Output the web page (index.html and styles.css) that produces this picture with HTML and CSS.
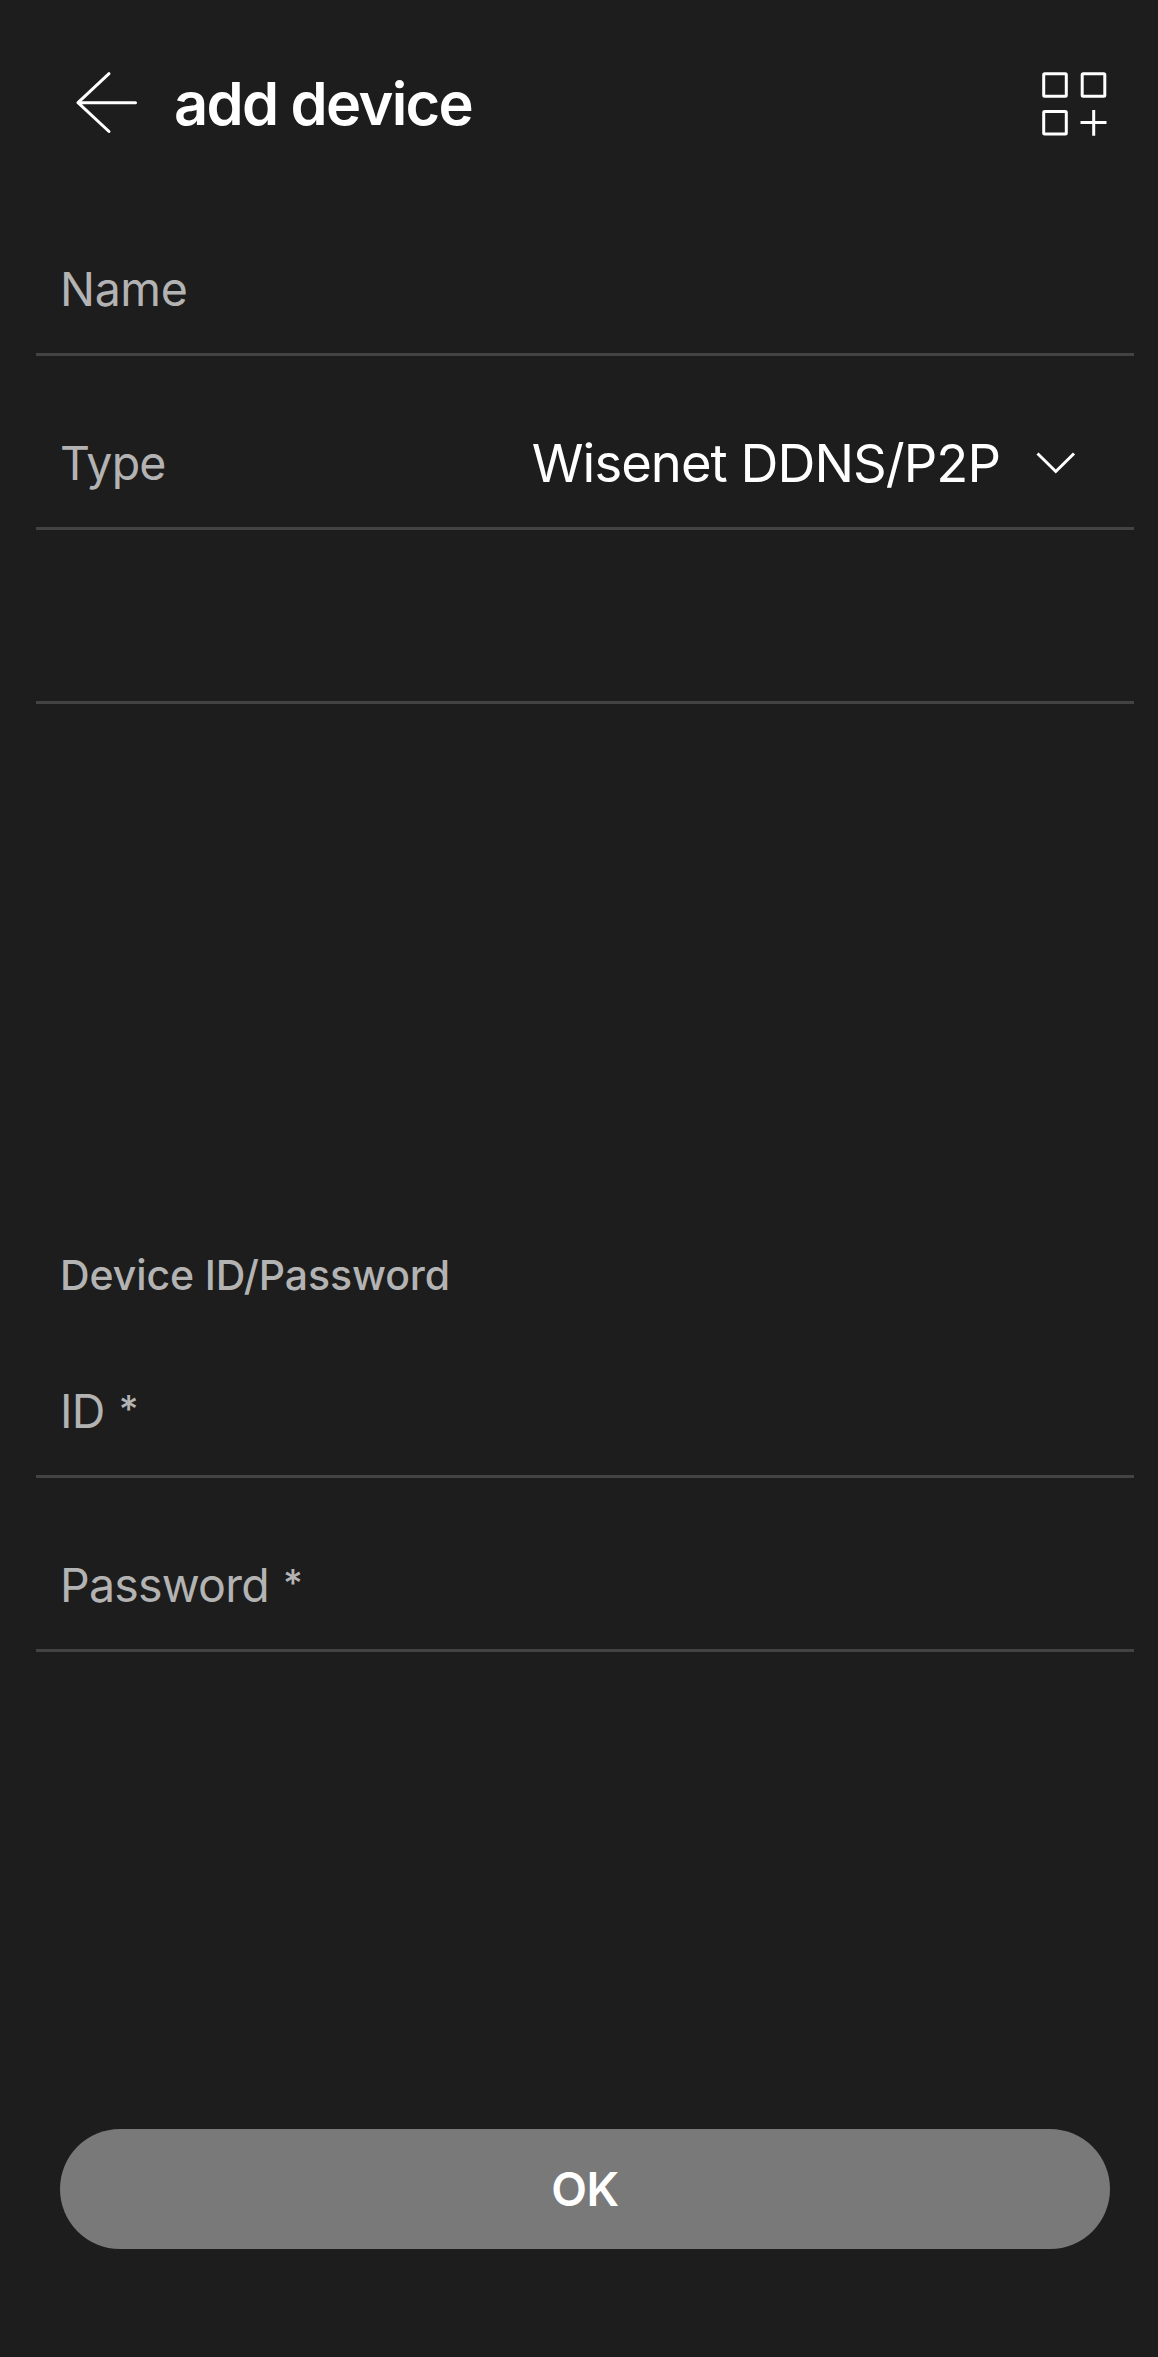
FILE: index.html
```html
<!DOCTYPE html>
<html lang="en">

<head>
    <meta charset="UTF-8">
    <meta name="viewport" content="width=device-width, initial-scale=1.0">
    <title>add device</title>
    <link rel="stylesheet" href="styles.css">
</head>

<body>

    <header class="header">
        <svg class="back" width="64" height="64" viewBox="0 0 64 64">
            <path d="M34 3.7 L3 32.7 L34 61.5 M3 32.7 H60.5" />
        </svg>
        <h1>add device</h1>
        <svg class="scan" width="70" height="70" viewBox="0 0 70 70">
            <rect x="3.7" y="3.7" width="22.6" height="22.6" rx="1" />
            <rect x="42.2" y="3.7" width="22.6" height="22.6" rx="1" />
            <rect x="3.7" y="41.5" width="22.6" height="22.6" rx="1" />
            <path d="M40.5 52.5 H66.5 M53.7 40 V65.7" />
        </svg>
    </header>

    <main class="form">
        <div class="row">
            <span class="label name">Name</span>
        </div>
        <div class="row">
            <span class="label">Type</span>
            <div class="select">
                <span class="value">Wisenet DDNS/P2P</span>
                <svg class="arrow" width="42" height="24" viewBox="0 0 42 24">
                    <path d="M2.5 2.5 L20.8 20.5 L39 2.5" />
                </svg>
            </div>
        </div>
        <div class="row"></div>

        <h2>Device ID/Password</h2>
        <div class="row id-row">
            <span class="label">ID <span class="star">*</span></span>
        </div>
        <div class="row">
            <span class="label">Password <span class="star">*</span></span>
        </div>
    </main>

    <button class="ok">OK</button>

</body>

</html>
```

FILE: styles.css
```css
* {
    box-sizing: border-box;
}

body {
    margin: 0;
    min-height: 2357px;
    display: flex;
    flex-direction: column;
    background-color: #1d1d1d;
    color: white;
    font-family: Inter, "Liberation Sans", sans-serif;
}

svg {
    display: block;
    fill: none;
    stroke: white;
    stroke-width: 3;
}

.header {
    height: 182px;
    padding: 68px 48px 0 75px;
    display: flex;
    align-items: flex-start;
}

.back {
    margin-top: 2px;
    stroke-linecap: round;
    stroke-linejoin: round;
}

h1 {
    margin: -1px auto 0 35px;
    font-size: 59.5px;
    font-weight: 600;
    line-height: 72px;
    letter-spacing: -1.7px;
}

.scan {
    margin-top: 2px;
}

.form {
    padding: 0 24px 0 36px;
}

.row {
    height: 174px;
    padding: 0 24px 36px;
    display: flex;
    justify-content: space-between;
    align-items: flex-end;
    border-bottom: 3px solid #434343;
}

.label {
    color: #b3b3b3;
    font-size: 46.5px;
    line-height: 56px;
    letter-spacing: -0.8px;
}

.name {
    letter-spacing: -0.4px;
}

.star {
    margin-left: 2px;
    font-size: 38px;
    font-weight: 500;
    line-height: 1;
    vertical-align: 5px;
}

.select {
    display: flex;
    align-items: center;
    gap: 35px;
    padding-right: 33px;
    margin-bottom: -4px;
}

.value {
    font-size: 52.5px;
    line-height: 64px;
    letter-spacing: -0.95px;
}

.arrow {
    margin-top: -1px;
}

h2 {
    margin: 546px 0 0 24px;
    color: #b3b3b3;
    font-size: 41px;
    font-weight: 500;
    line-height: 50px;
    letter-spacing: -0.1px;
}

.id-row {
    height: 178px;
}

.ok {
    height: 120px;
    margin: auto 48px 108px 60px;
    border: none;
    border-radius: 60px;
    background-color: #797979;
    color: white;
    font-family: inherit;
    font-size: 46.5px;
    font-weight: 600;
    letter-spacing: -0.5px;
}
```
